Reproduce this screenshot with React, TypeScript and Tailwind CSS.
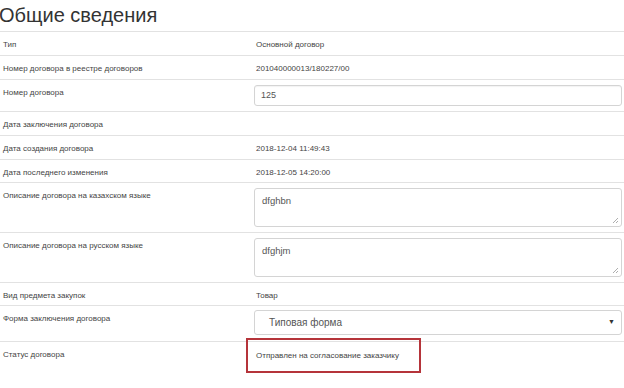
import React from "react";

const font = { fontFamily: '"Liberation Sans", Arial, sans-serif' };

function Grip() {
  return (
    <svg className="absolute right-[2px] bottom-[2px]" width="7" height="7" viewBox="0 0 7 7">
      <path d="M6 1 L1 6 M6 4 L4 6" stroke="#999" strokeWidth="0.8" />
    </svg>
  );
}

function Row({ label, children, h, pad = "pt-[6px]" }: { label: string; children?: React.ReactNode; h: string; pad?: string }) {
  return (
    <div className={`grid grid-cols-[254px_1fr] border-t border-[#e2e2e2] ${h}`}>
      <div className="pl-[3px] pt-[7px] text-[8px] leading-[11px] text-[#444]">{label}</div>
      <div className={`${pad} pr-[2px]`}>{children}</div>
    </div>
  );
}

function Plain({ v }: { v: string }) {
  return <div className="pl-[2px] pt-[1px] text-[8px] leading-[11px] text-[#444]">{v}</div>;
}

export default function App() {
  return (
    <div className="w-[624px] h-[388px] bg-white overflow-hidden relative" style={font}>
      <div className="h-[31px] pt-[3px] pl-0 text-[20px] leading-[24px] text-[#333] -ml-[1px]">Общие сведения</div>
      <Row label="Тип" h="h-[24px]"><Plain v="Основной договор" /></Row>
      <Row label="Номер договора в реестре договоров" h="h-[24px]"><Plain v="201040000013/180227/00" /></Row>
      <Row label="Номер договора" h="h-[32px]" pad="pt-[5px]">
        <div className="h-[21px] border border-[#d4d4d4] rounded-[3px] shadow-[inset_0_1px_1px_rgba(0,0,0,0.05)] pl-[6px] text-[9px] leading-[19px] text-[#555]">125</div>
      </Row>
      <Row label="Дата заключения договора" h="h-[24px]" />
      <Row label="Дата создания договора" h="h-[24px]"><Plain v="2018-12-04 11:49:43" /></Row>
      <Row label="Дата последнего изменения" h="h-[23px]"><Plain v="2018-12-05 14:20:00" /></Row>
      <Row label="Описание договора на казахском языке" h="h-[50px]" pad="pt-[5px]">
        <div className="relative h-[39px] border border-[#d4d4d4] rounded-[3px] pl-[7px] pt-[5px] text-[9.5px] leading-[13px] text-[#555]">
          dfghbn
          <Grip />
        </div>
      </Row>
      <Row label="Описание договора на русском языке" h="h-[50px]" pad="pt-[5px]">
        <div className="relative h-[39px] border border-[#d4d4d4] rounded-[3px] pl-[7px] pt-[5px] text-[9.5px] leading-[13px] text-[#555]">
          dfghjm
          <Grip />
        </div>
      </Row>
      <Row label="Вид предмета закупок" h="h-[23px]"><Plain v="Товар" /></Row>
      <Row label="Форма заключения договора" h="h-[36px]" pad="pt-[4px]">
        <div className="flex items-center justify-between h-[25px] border border-[#d4d4d4] rounded-[3px] pl-[14px] pr-[6px] text-[10px] text-[#555]">
          <span>Типовая форма</span>
          <span className="text-[7px] text-[#333]">▼</span>
        </div>
      </Row>
      <Row label="Статус договора" h="h-[47px]" pad="pt-[7px]"><Plain v="Отправлен на согласование заказчику" /></Row>
      <div className="absolute left-[246px] top-[338px] w-[175px] h-[35px] border-2 border-[#b5343a]" />
    </div>
  );
}
